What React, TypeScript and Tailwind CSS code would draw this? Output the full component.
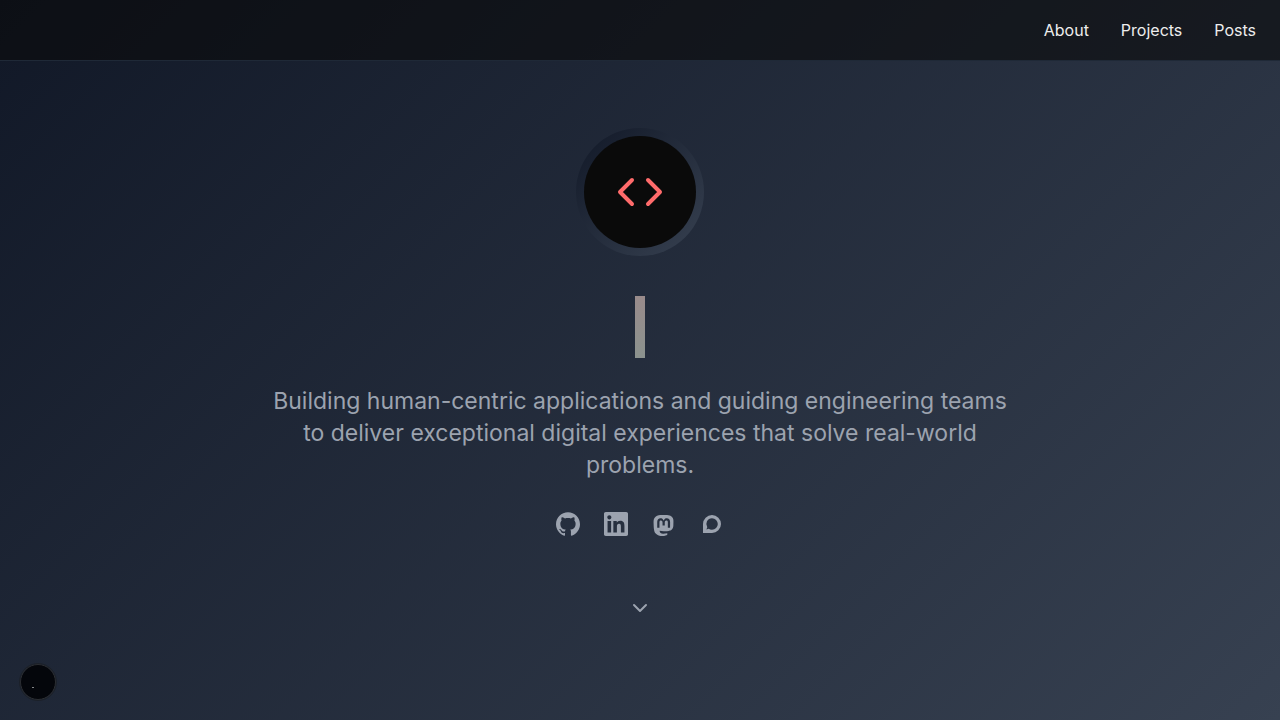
import { ChevronDown } from 'lucide-react';
import { SiGithub, SiLinkedin, SiMastodon } from 'react-icons/si';

const navLinks = ['About', 'Projects', 'Posts'];

function Header() {
  return (
    <header className="border-b border-[#1f2937] bg-[#0a0a0a]/60">
      <nav className="flex h-15 items-center justify-end gap-8 px-6">
        {navLinks.map((label) => (
          <a key={label} href={`#${label.toLowerCase()}`} className="text-base text-[#ededed]">
            {label}
          </a>
        ))}
      </nav>
    </header>
  );
}

function Avatar() {
  return (
    <div className="rounded-full bg-linear-to-br/srgb from-[#111827] to-[#374151] p-2">
      <div className="flex size-28 items-center justify-center rounded-full bg-[#0a0a0a]">
        <svg className="size-14" viewBox="0 0 56 56" fill="none" stroke="#ff6b6b" strokeWidth="4" strokeLinecap="round" strokeLinejoin="round" aria-hidden="true">
          <path d="M20 16 8 28l12 12M36 16l12 12-12 12" />
        </svg>
      </div>
    </div>
  );
}

function BubbleIcon() {
  return (
    <svg className="size-6" viewBox="0 0 24 24" fill="currentColor" fillRule="evenodd" aria-hidden="true">
      <path d="M3 21v-9a9 9 0 1 1 9 9H3ZM12 6.200a5.800 5.800 0 0 1 0 11.600c-1.400 0-2.500-.400-3.300-1l-2.300.700.900-2.300A5.800 5.800 0 0 1 12 6.200Z" />
    </svg>
  );
}

export default function App() {
  return (
    <div className="flex min-h-screen flex-col bg-[linear-gradient(135deg,#111827,#374151)] font-['Inter','Liberation_Sans',sans-serif]">
      <Header />
      <main className="flex flex-1 flex-col items-center px-6 pt-[67px] text-center">
        <Avatar />
        <h1 className="mt-10 h-[62px] text-6xl" aria-label="Introduction">
          <span className="block h-full w-2.5 bg-linear-to-b/srgb from-[#998b8b] to-[#8b928e]" />
        </h1>
        <p className="mt-[27px] max-w-[744px] text-[23px] leading-8 text-[#9ca3af]">
          Building human-centric applications and guiding engineering teams to deliver exceptional digital experiences that solve real-world problems.
        </p>
        <div className="mt-[31px] flex gap-6 text-[#9ca3af]">
          <a href="#github" aria-label="GitHub"><SiGithub className="size-6" /></a>
          <a href="#linkedin" aria-label="LinkedIn"><SiLinkedin className="size-6" /></a>
          <a href="#mastodon" aria-label="Mastodon" className="flex size-6 items-end pl-px"><SiMastodon className="size-[21px]" /></a>
          <a href="#chat" aria-label="Chat"><BubbleIcon /></a>
        </div>
        <a href="#about" aria-label="Scroll down" className="mt-[60px] text-[#9ca3af]">
          <ChevronDown className="size-6" />
        </a>
      </main>
      <button aria-label="Open developer tools" className="fixed bottom-5 left-5 flex size-9 items-center justify-center rounded-full border border-[#2d2f33] bg-[#04060b] outline outline-[#1c2129]">
        <span className="mt-2.5 mr-2.5 h-px w-0.5 bg-[#85878a]" />
      </button>
    </div>
  );
}
